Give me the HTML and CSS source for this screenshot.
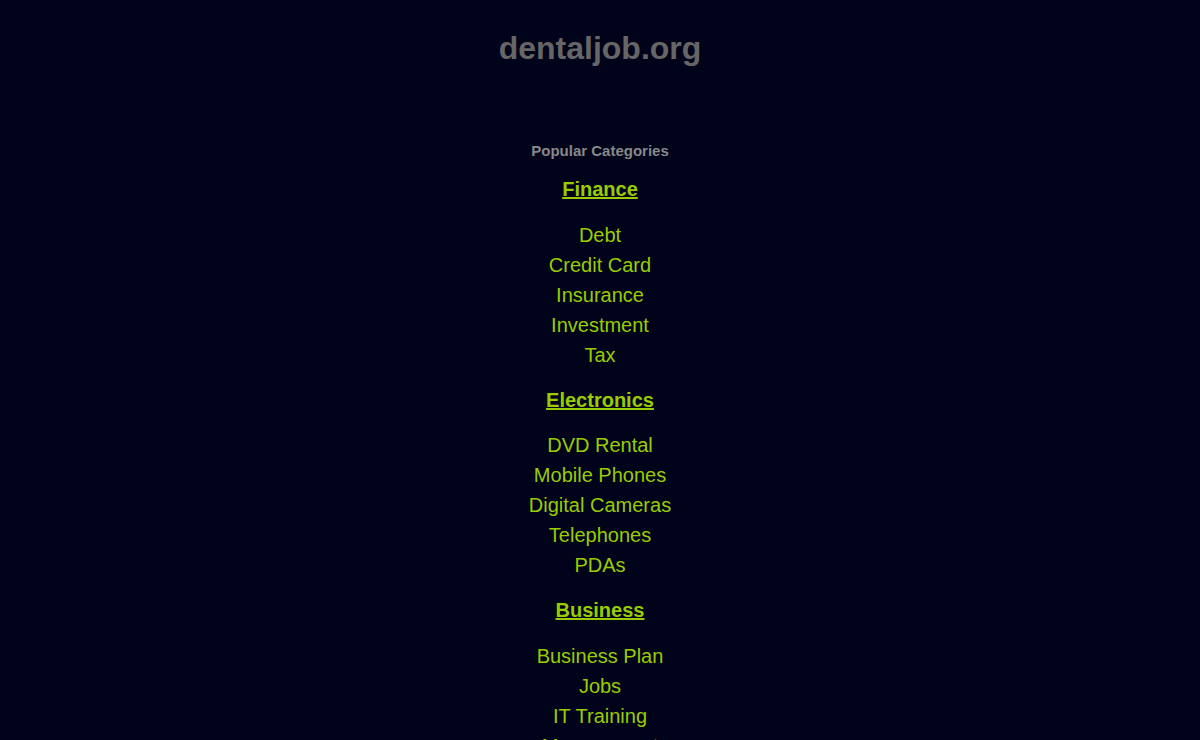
FILE: index.html
```html
<!DOCTYPE html>
<html lang="en">
<head>
    <title>dentaljob.org</title>
    <meta charset="UTF-8">
    <meta name="viewport" content="width=device-width, initial-scale=1.0">
    <link rel="stylesheet" href="styles.css">
</head>
<body>
    <div id="container">
        <h1 class="site">dentaljob.org</h1>

        <div class="popular">
            <h2 class="popular-title">Popular Categories</h2>

            <div class="categorie">
                <a class="cat-link" href="#">Finance</a>
                <ul class="liste">
                    <li><a href="#">Debt</a></li>
                    <li><a href="#">Credit Card</a></li>
                    <li><a href="#">Insurance</a></li>
                    <li><a href="#">Investment</a></li>
                    <li><a href="#">Tax</a></li>
                </ul>
            </div>

            <div class="categorie">
                <a class="cat-link" href="#">Electronics</a>
                <ul class="liste">
                    <li><a href="#">DVD Rental</a></li>
                    <li><a href="#">Mobile Phones</a></li>
                    <li><a href="#">Digital Cameras</a></li>
                    <li><a href="#">Telephones</a></li>
                    <li><a href="#">PDAs</a></li>
                </ul>
            </div>

            <div class="categorie">
                <a class="cat-link" href="#">Business</a>
                <ul class="liste">
                    <li><a href="#">Business Plan</a></li>
                    <li><a href="#">Jobs</a></li>
                    <li><a href="#">IT Training</a></li>
                    <li><a href="#">Management</a></li>
                    <li><a href="#">Marketing</a></li>
                </ul>
            </div>
        </div>
    </div>
</body>
</html>
```

FILE: styles.css
```css
body {
    margin: 0;
    background-color: #00031a;
    font-family: "Liberation Sans", Arial, sans-serif;
}

#container {
    text-align: center;
    padding-top: 28px;
}

.site {
    margin: 0;
    font-size: 32px;
    line-height: 40px;
    font-weight: bold;
    color: #666;
}

/****** CATEGORIES ******/
.popular {
    margin-top: 73px;
}
.popular-title {
    margin: 0 0 13px;
    font-size: 15px;
    line-height: 20px;
    font-weight: bold;
    color: #888;
}
.categorie {
    margin-bottom: 15px;
}
.cat-link {
    display: block;
    font-size: 20px;
    line-height: 30px;
    font-weight: bold;
    color: #99cc00;
    text-decoration: underline;
    margin-bottom: 15.5px;
}
.liste {
    list-style: none;
    margin: 0;
    padding: 0;
}
.liste li {
    font-size: 20px;
    line-height: 30px;
}
.liste a {
    color: #99cc00;
    text-decoration: none;
}
```
